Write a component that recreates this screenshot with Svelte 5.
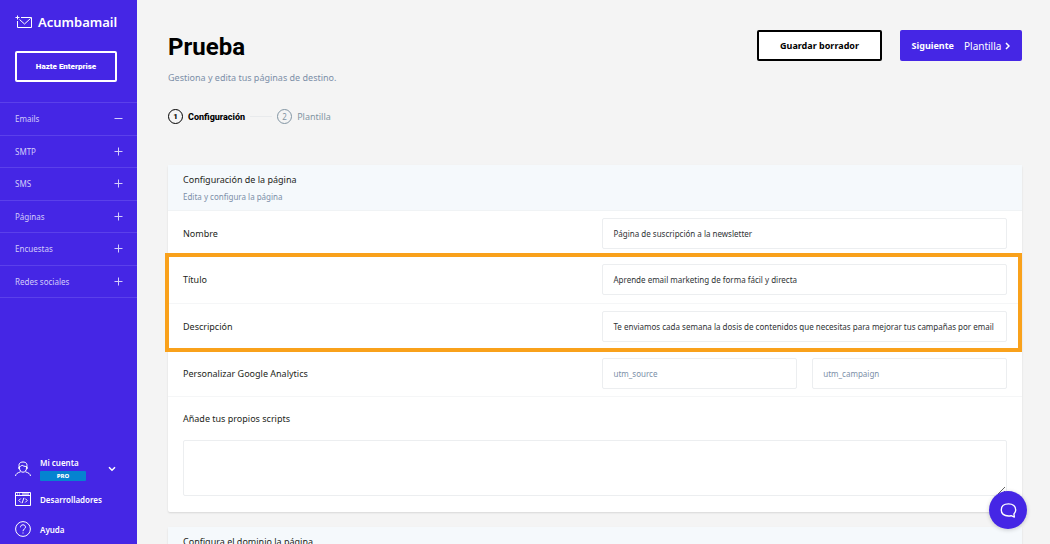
<script>
  let sections = $state([
    { name: 'Emails', open: true },
    { name: 'SMTP', open: false },
    { name: 'SMS', open: false },
    { name: 'Páginas', open: false },
    { name: 'Encuestas', open: false },
    { name: 'Redes sociales', open: false }
  ]);

  let nombre = $state('Página de suscripción a la newsletter');
  let titulo = $state('Aprende email marketing de forma fácil y directa');
  let descripcion = $state('Te enviamos cada semana la dosis de contenidos que necesitas para mejorar tus campañas por email');
  let utmSource = $state('');
  let utmCampaign = $state('');
  let scripts = $state('');
</script>

<div class="layout">
  <aside class="sidebar">
    <a class="brand" href="#inicio">
      <svg class="brand-icon" viewBox="0 0 18 14" aria-hidden="true">
        <path d="M6 2.5h10.5v10h-14V6" />
        <path d="M4.5 4.5l5 4.5 6-5.5" />
        <path d="M2.5 0.5v4M0.5 2.5h4" />
      </svg>
      <span>Acumbamail</span>
    </a>

    <button class="enterprise-btn">Hazte Enterprise</button>

    <nav class="nav">
      {#each sections as section}
        <button class="nav-item" onclick={() => (section.open = !section.open)}>
          <span>{section.name}</span>
          <svg class="toggle" viewBox="0 0 9 9" aria-hidden="true">
            <path d={section.open ? 'M0.5 4.5h8' : 'M0.5 4.5h8M4.5 0.5v8'} />
          </svg>
        </button>
      {/each}
    </nav>

    <!-- Account links -->
    <div class="account">
      <button class="account-item">
        <svg class="account-icon" viewBox="0 0 16 16" aria-hidden="true">
          <path d="M4.2 6C3.4 2.7 5 1 8 1s4.6 1.7 3.8 5" />
          <path d="M4.5 5.5v1.5c0 2.5 1.6 4.2 3.5 4.2s3.5-1.7 3.5-4.2V5.5C9.5 5.500 8 5 7 4 6.500 5 5.500 5.500 4.500 5.500z" />
          <path d="M4 6c-.8.2-.8 2 .6 2.2M12 6c.8.2.8 2-.6 2.2" />
          <path d="M0.5 15c.3-2.2 1.7-3 5.2-4.3M15.5 15c-.3-2.2-1.7-3-5.2-4.3" />
        </svg>
        <span class="account-name">
          <span>Mi cuenta</span>
          <span class="badge">PRO</span>
        </span>
        <svg class="chevron" viewBox="0 0 8 6" aria-hidden="true">
          <path d="M1 1.2l3 3 3-3" />
        </svg>
      </button>
      <a class="account-item" href="#desarrolladores">
        <svg class="account-icon" viewBox="0 0 16 16" aria-hidden="true">
          <path d="M0.5 1.5h15v13h-15zM0.5 4.5h15" />
          <path d="M2 3h1M4 3h1M7 3h7" />
          <path d="M5.8 7.5L3.8 9.5l2 2M10.2 7.5l2 2-2 2M8.9 6.8l-1.8 5.4" />
        </svg>
        <span>Desarrolladores</span>
      </a>
      <a class="account-item" href="#ayuda">
        <svg class="account-icon" viewBox="0 0 16 16" aria-hidden="true">
          <circle cx="8" cy="8" r="7.4" />
          <path d="M5.5 6.3C5.5 4.7 6.6 3.8 8 3.8s2.5.9 2.5 2.3C10.5 8 8 8 8 10.2" />
          <path d="M8 11.5v1" />
        </svg>
        <span>Ayuda</span>
      </a>
    </div>
  </aside>

  <main class="content">
    <header class="page-header">
      <div>
        <h1>Prueba</h1>
        <p class="subtitle">Gestiona y edita tus páginas de destino.</p>
      </div>
      <div class="actions">
        <button class="btn btn-outline">Guardar borrador</button>
        <button class="btn btn-primary">
          <strong>Siguiente</strong>
          <span class="next-step">
            Plantilla
            <svg class="next-icon" viewBox="0 0 5 8" aria-hidden="true">
              <path d="M1 1l3 3-3 3" />
            </svg>
          </span>
        </button>
      </div>
    </header>

    <ol class="steps">
      <li class="step active"><span class="step-num">1</span>Configuración</li>
      <li class="step"><span class="step-num">2</span>Plantilla</li>
    </ol>

    <section class="card">
      <div class="card-header">
        <h2>Configuración de la página</h2>
        <p>Edita y configura la página</p>
      </div>

      <div class="row">
        <label for="nombre">Nombre</label>
        <input id="nombre" type="text" bind:value={nombre} />
      </div>

      <div class="highlight">
        <div class="row">
          <label for="titulo">Título</label>
          <input id="titulo" type="text" bind:value={titulo} />
        </div>
        <div class="row">
          <label for="descripcion">Descripción</label>
          <input id="descripcion" type="text" bind:value={descripcion} />
        </div>
      </div>

      <div class="row">
        <label for="utm-source">Personalizar Google Analytics</label>
        <div class="utm">
          <input id="utm-source" type="text" placeholder="utm_source" bind:value={utmSource} />
          <input type="text" placeholder="utm_campaign" aria-label="utm_campaign" bind:value={utmCampaign} />
        </div>
      </div>

      <div class="scripts">
        <label for="scripts">Añade tus propios scripts</label>
        <textarea id="scripts" bind:value={scripts}></textarea>
      </div>
    </section>

    <section class="card">
      <div class="card-header">
        <h2>Configura el dominio la página</h2>
      </div>
    </section>
  </main>

  <button class="chat" aria-label="Chat">
    <svg viewBox="0 0 16 16" aria-hidden="true">
      <path d="M13.5 14.2l-.4-3C14.2 10.2 14.8 9 14.8 7.5c0-3.5-2.5-5.7-6.8-5.7S1.2 4 1.2 7.5s2.5 5.7 6.800 5.700c.9 0 1.700-.1 2.500-.3z" />
    </svg>
  </button>
</div>

<style>
  :global(body) {
    background: #f4f4f4;
  }

  .layout {
    --purple: #4526e5;
    --muted: #7c8fa8;
    --line: #eceef0;
    --bold-font: Roboto, 'Noto Sans', sans-serif;
    display: flex;
    height: 100vh;
    overflow: hidden;
    font-family: 'Noto Sans', 'Open Sans', sans-serif;
    font-size: 8px;
    color: #1d1f21;
  }

  button, input, textarea {
    font: inherit;
    box-sizing: border-box;
  }

  button {
    cursor: pointer;
  }

  a {
    color: inherit;
    text-decoration: none;
  }

  svg {
    fill: none;
    stroke: currentColor;
    flex-shrink: 0;
  }

  h1, h2, p, ol {
    margin: 0;
    padding: 0;
  }

  /* Sidebar */
  .sidebar {
    width: 137px;
    flex-shrink: 0;
    display: flex;
    flex-direction: column;
    background: var(--purple);
    color: #fff;
  }

  .brand {
    display: flex;
    align-items: center;
    gap: 5px;
    margin: 14px 0 13px 15px;
    font-size: 13px;
    font-weight: 600;
    line-height: 16px;
  }

  .brand-icon {
    width: 18px;
    height: 14px;
  }

  .enterprise-btn {
    height: 31px;
    margin: 8px 20px 20px 15px;
    padding: 0;
    background: transparent;
    border: 2px solid #fff;
    border-radius: 2px;
    color: #fff;
    font-family: var(--bold-font);
    font-weight: 900;
  }

  .nav {
    display: flex;
    flex-direction: column;
    height: 195px;
    border-top: 1px solid #5b40ea;
  }

  .nav-item {
    flex: 1;
    display: flex;
    align-items: center;
    justify-content: space-between;
    padding: 0 14px 0 15px;
    background: transparent;
    border: none;
    border-bottom: 1px solid #5b40ea;
    color: #d3ccfa;
  }

  .toggle {
    width: 9px;
    height: 9px;
  }

  .account {
    margin-top: auto;
    display: flex;
    flex-direction: column;
    padding: 0 21px 0 15px;
    font-weight: 600;
  }

  .account-item {
    display: flex;
    align-items: center;
    gap: 9px;
    height: 30px;
    padding: 0;
    background: transparent;
    border: none;
    color: #fff;
    text-align: left;
  }

  .account-icon {
    width: 16px;
    height: 16px;
    stroke-width: 1;
  }

  .account-name {
    display: flex;
    flex-direction: column;
    gap: 2px;
    line-height: 12px;
  }

  .badge {
    width: 46px;
    background: #0583d0;
    border-radius: 1px;
    font-size: 6px;
    font-weight: 800;
    line-height: 10px;
    text-align: center;
  }

  .chevron {
    width: 8px;
    height: 6px;
    margin-left: auto;
    stroke-width: 1.5;
  }

  /* Main column */
  .content {
    flex: 1;
    min-width: 0;
    padding: 30px 28px 0 31px;
    overflow: hidden;
  }

  .page-header {
    display: flex;
    justify-content: space-between;
    align-items: flex-start;
  }

  h1 {
    font-family: var(--bold-font);
    font-size: 24px;
    font-weight: 700;
    line-height: 34px;
    color: #000;
  }

  .subtitle {
    margin-top: 7px;
    font-size: 9px;
    line-height: 14px;
    color: var(--muted);
  }

  .actions {
    display: flex;
    gap: 18px;
  }

  .btn {
    display: flex;
    align-items: center;
    justify-content: center;
    gap: 10px;
    height: 31px;
    padding: 0 10px;
    border-radius: 2px;
    font-size: 9px;
  }

  .btn-outline {
    min-width: 125px;
    background: #fff;
    border: 2px solid #000;
    color: #000;
    font-weight: 700;
  }

  .btn-primary {
    min-width: 122px;
    background: var(--purple);
    border: none;
    color: #fff;
  }

  .next-step {
    display: flex;
    align-items: center;
    gap: 4px;
    font-size: 10px;
  }

  .next-icon {
    width: 5px;
    height: 8px;
    stroke-width: 1.5;
  }

  .steps {
    display: flex;
    align-items: center;
    margin: 24px 0 41px;
    list-style: none;
    font-size: 9px;
  }

  .step {
    display: flex;
    align-items: center;
    gap: 5px;
    color: #8295a3;
  }

  .step.active {
    color: #000;
    font-family: var(--bold-font);
    font-weight: 800;
  }

  .step.active::after {
    content: '';
    width: 22px;
    height: 1px;
    margin-right: 5px;
    background: #e8eaec;
  }

  .step-num {
    display: flex;
    align-items: center;
    justify-content: center;
    width: 15px;
    height: 15px;
    box-sizing: border-box;
    border: 1px solid currentColor;
    border-radius: 50%;
    font-size: 8px;
  }

  /* Cards */
  .card {
    margin-bottom: 15px;
    background: #fff;
    border-radius: 2px;
    box-shadow: 0 1px 2px rgba(0, 0, 0, 0.12);
  }

  .card-header {
    padding: 7px 15px 5px;
    background: #f5f9fc;
    border-bottom: 1px solid #f0f3f5;
  }

  h2, label {
    font-size: 9px;
    font-weight: 400;
    line-height: 16px;
  }

  .card-header p {
    margin-top: 1px;
    line-height: 16px;
    color: var(--muted);
  }

  .row {
    display: grid;
    grid-template-columns: minmax(0, 28fr) minmax(0, 27fr);
    align-items: center;
    padding: 7px 15px;
    border-bottom: 1px solid #f5f6f7;
  }

  .highlight {
    position: relative;
  }

  .highlight .row {
    padding-bottom: 8px;
  }

  .highlight::after {
    content: '';
    position: absolute;
    inset: -4px 0 -1px -3px;
    border: 4px solid #f9a11b;
    pointer-events: none;
  }

  input, textarea {
    width: 100%;
    background: #fff;
    border: 1px solid var(--line);
    border-radius: 2px;
    color: #2f3335;
    outline: none;
  }

  input {
    height: 31px;
    padding: 0 10px;
  }

  input::placeholder {
    color: var(--muted);
    opacity: 1;
  }

  .utm {
    display: grid;
    grid-template-columns: 1fr 1fr;
    gap: 15px;
  }

  .scripts {
    padding: 14px 15px 16px;
  }

  textarea {
    display: block;
    height: 56px;
    margin-top: 13px;
    padding: 8px 10px;
    resize: vertical;
  }

  .chat {
    position: fixed;
    right: 23px;
    bottom: 15px;
    display: flex;
    align-items: center;
    justify-content: center;
    width: 38px;
    height: 38px;
    padding: 0;
    background: var(--purple);
    border: none;
    border-radius: 50%;
    box-shadow: 0 1px 4px rgba(0, 0, 0, 0.2);
    color: #fff;
  }

  .chat svg {
    width: 17px;
    height: 17px;
    stroke-width: 1.3;
    stroke-linejoin: round;
  }
</style>
